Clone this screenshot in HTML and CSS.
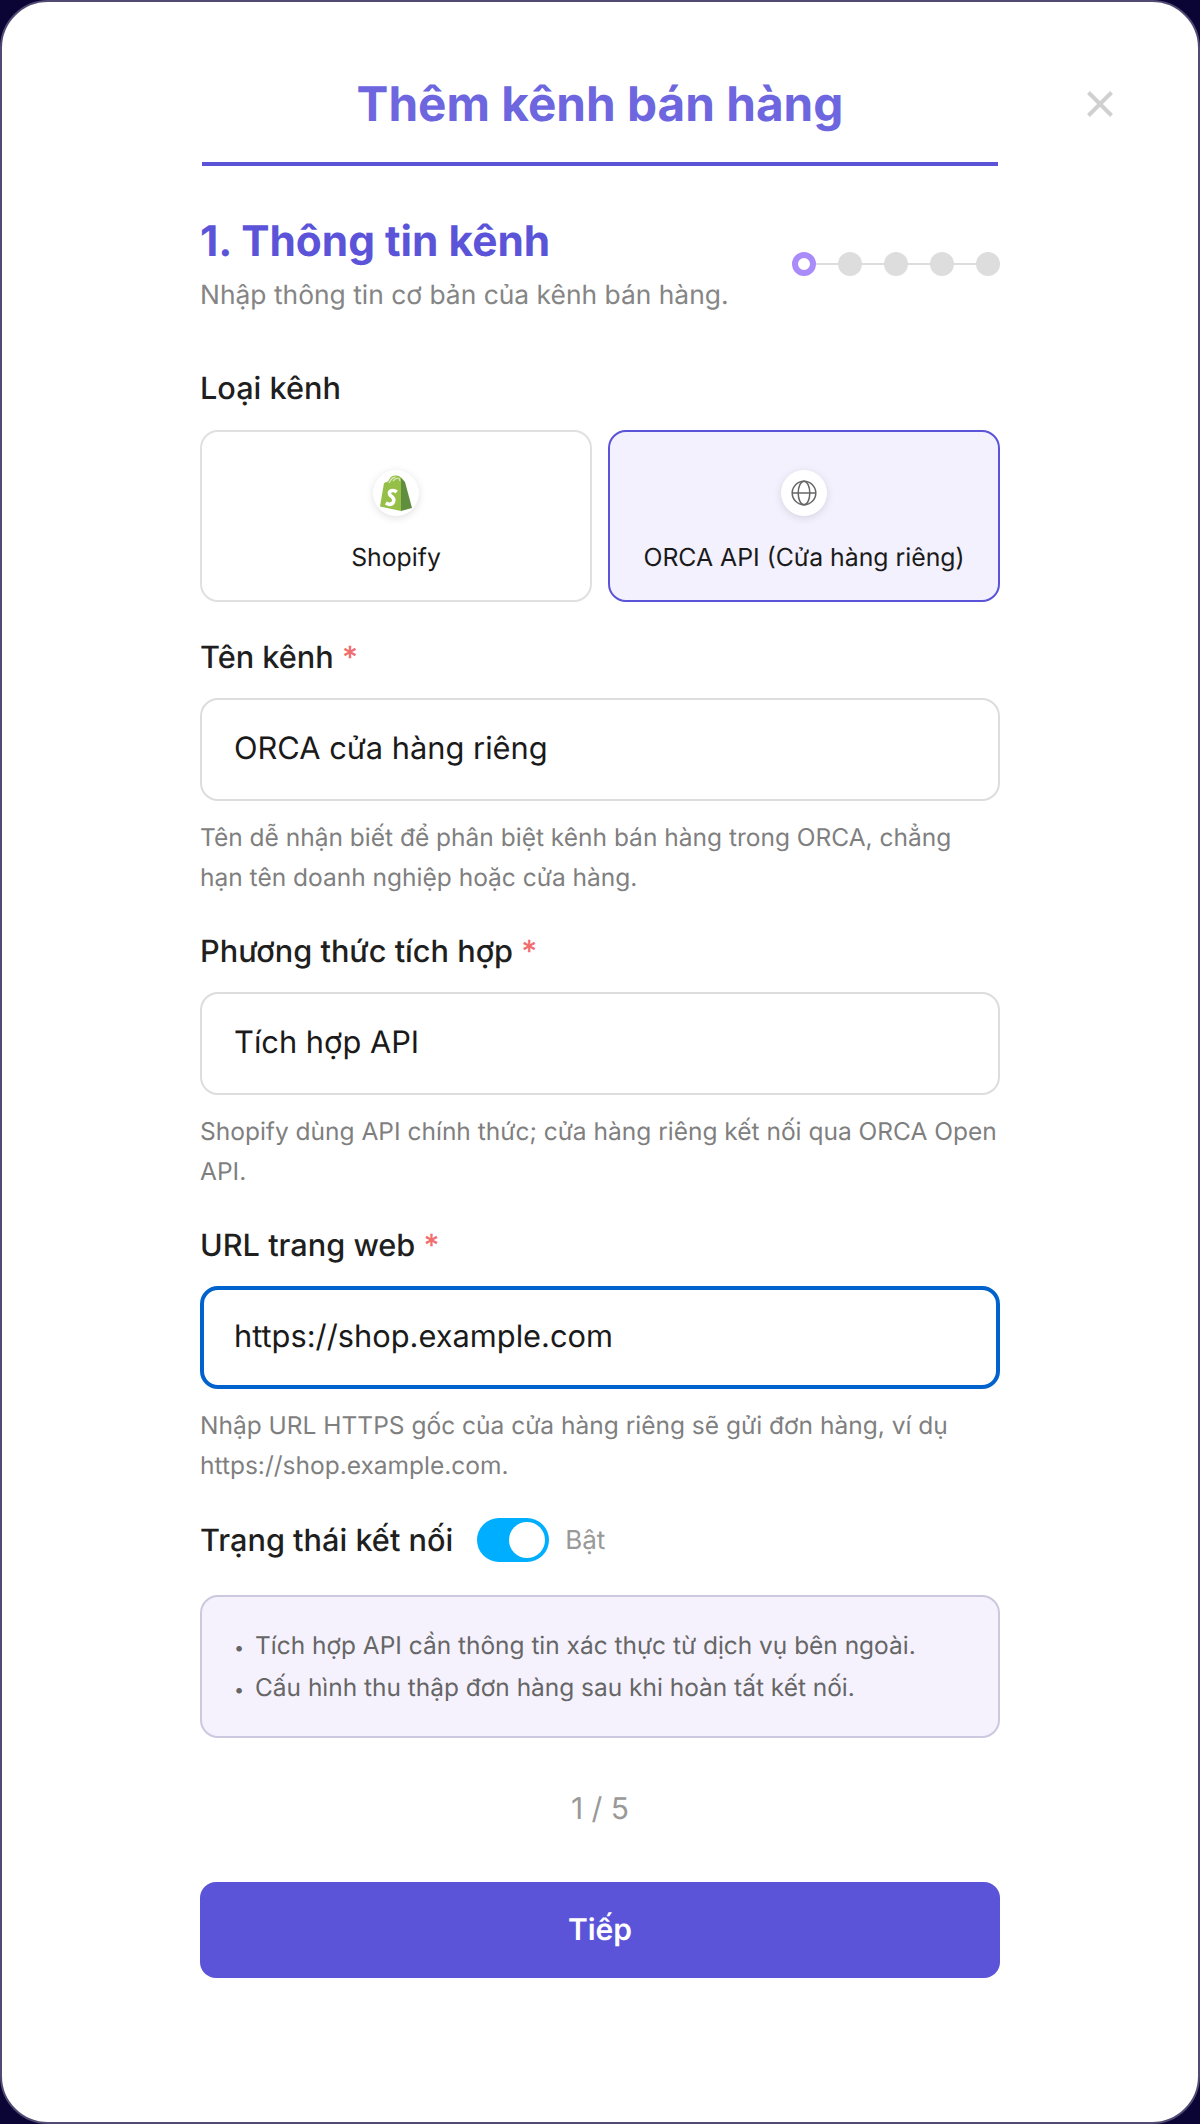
FILE: index.html
```html
<!DOCTYPE html>
<html lang="vi">
<head>
  <meta charset="UTF-8" />
  <meta name="viewport" content="width=device-width, initial-scale=1.0"/>
  <title>Thêm kênh bán hàng</title>
  <link rel="stylesheet" href="styles.css">
</head>
<body>

<div class="modal">
  <div class="modal-head">
    <h1>Thêm kênh bán hàng</h1>
    <button class="close" aria-label="Đóng">
      <svg width="26" height="26" viewBox="0 0 26 26"><path d="M1.5 1.5l23 23M24.500 1.500l-23 23" stroke="#d0d0d0" stroke-width="4" fill="none"/></svg>
    </button>
  </div>

  <div class="step-head">
    <div>
      <h2>1. Thông tin kênh</h2>
      <p class="step-desc">Nhập thông tin cơ bản của kênh bán hàng.</p>
    </div>
    <div class="stepper">
      <span class="dot active"></span>
      <span class="dot"></span>
      <span class="dot"></span>
      <span class="dot"></span>
      <span class="dot"></span>
    </div>
  </div>

  <div class="field type-field">
    <div class="label">Loại kênh</div>
    <div class="type-grid">
      <div class="type-card">
        <span class="type-icon">
          <svg width="32" height="36" viewBox="0 0 32 36">
            <path d="M21 2.500 L25 7 L32 33 L21 36 Z" fill="#5e8e3e"/>
            <path d="M0 31.500 L4 8 Q6 7 8 6.500 Q11 0 15 0.500 Q19 0 21 2.500 L21 36 Z" fill="#95bf47"/>
            <path d="M9 8 Q12 2 15.500 2 M13 6 Q16 2 19 3.500 L20 6" fill="none" stroke="#d7e6b5" stroke-width="1.300"/>
            <path d="M16.800 17 Q14 14.800 11 15.800 Q8 17.800 10.500 20.500 Q15 23.500 13.500 27 Q11 31 5.800 28" fill="none" stroke="#fff" stroke-width="3.600"/>
          </svg>
        </span>
        <span>Shopify</span>
      </div>
      <div class="type-card selected">
        <span class="type-icon">
          <svg width="26" height="26" viewBox="0 0 26 26" fill="none" stroke="#666" stroke-width="1.500">
            <circle cx="13" cy="13" r="11.800"/>
            <ellipse cx="13" cy="13" rx="5.800" ry="11.800"/>
            <path d="M1.200 13h23.600"/>
          </svg>
        </span>
        <span>ORCA API (Cửa hàng riêng)</span>
      </div>
    </div>
  </div>

  <div class="field">
    <label class="label">Tên kênh <span class="req">*</span></label>
    <input class="text-input" type="text" value="ORCA cửa hàng riêng" readonly>
    <p class="hint">Tên dễ nhận biết để phân biệt kênh bán hàng trong ORCA, chẳng hạn tên doanh nghiệp hoặc cửa hàng.</p>
  </div>

  <div class="field">
    <label class="label">Phương thức tích hợp <span class="req">*</span></label>
    <input class="text-input" type="text" value="Tích hợp API" readonly>
    <p class="hint">Shopify dùng API chính thức; cửa hàng riêng kết nối qua ORCA Open API.</p>
  </div>

  <div class="field">
    <label class="label">URL trang web <span class="req">*</span></label>
    <input class="text-input focused" type="text" value="https://shop.example.com" readonly>
    <p class="hint">Nhập URL HTTPS gốc của cửa hàng riêng sẽ gửi đơn hàng, ví dụ https://shop.example.com.</p>
  </div>

  <div class="status-row">
    <span class="label">Trạng thái kết nối</span>
    <span class="toggle"><span class="thumb"></span></span>
    <span class="status-text">Bật</span>
  </div>

  <ul class="info-box">
    <li>Tích hợp API cần thông tin xác thực từ dịch vụ bên ngoài.</li>
    <li>Cấu hình thu thập đơn hàng sau khi hoàn tất kết nối.</li>
  </ul>

  <div class="pager">1 / 5</div>
  <button class="next">Tiếp</button>
</div>

</body>
</html>
```

FILE: styles.css
```css
* {
  box-sizing: border-box;
}

html, body {
  margin: 0;
  height: 100%;
}

body {
  background: #0a0535;
  font-family: Inter, "Noto Sans", sans-serif;
  color: #1f1f1f;
  text-rendering: geometricPrecision;
}

.modal {
  position: relative;
  height: 2124px;
  padding: 0 198px;
  background: #ffffff;
  border: 2px solid #514a72;
  border-radius: 48px;
}

.modal-head {
  height: 164px;
  margin: 0 2px;
  padding-top: 68px;
  border-bottom: 4px solid #5b54d9;
  text-align: center;
}

h1 {
  margin: 0;
  font-size: 47.700px;
  line-height: 68px;
  font-weight: 700;
  color: #6d66df;
}

.close {
  position: absolute;
  top: 89px;
  right: 85px;
  padding: 0;
  border: 0;
  background: none;
  line-height: 0;
}

.step-head {
  display: flex;
  justify-content: space-between;
  align-items: center;
  margin-top: 47px;
}

h2 {
  margin: 0;
  font-size: 42.400px;
  line-height: 58px;
  font-weight: 700;
  color: #5b54d9;
}

.step-desc {
  margin: 4px 0 0;
  font-size: 26.400px;
  line-height: 40px;
  color: #858585;
}

.stepper {
  display: flex;
  gap: 22px;
  background: linear-gradient(#dddddd, #dddddd) center / 100% 2px no-repeat;
}

.dot {
  width: 24px;
  height: 24px;
  border-radius: 50%;
  background: #dddddd;
}

.dot.active {
  background: #ffffff;
  border: 6px solid #a98bfa;
}

.field {
  margin-top: 32px;
}

.type-field {
  margin-top: 51px;
  margin-bottom: 33px;
}

.label {
  display: block;
  padding-top: 1px;
  font-size: 30.700px;
  line-height: 43px;
  font-weight: 500;
  color: #1f1f1f;
}

.req {
  color: #f26d6d;
}

.type-grid {
  display: grid;
  grid-template-columns: 1fr 1fr;
  gap: 16px;
  margin-top: 20px;
}

.type-card {
  display: flex;
  flex-direction: column;
  align-items: center;
  gap: 23px;
  height: 172px;
  padding-top: 38px;
  border: 2px solid #e0e0e0;
  border-radius: 18px;
  font-size: 24.800px;
  line-height: 36px;
  color: #1a1a1a;
}

.type-card.selected {
  border-color: #5b54d9;
  background: #f3f1fe;
}

.type-icon {
  display: flex;
  align-items: center;
  justify-content: center;
  width: 46px;
  height: 46px;
  border-radius: 50%;
  background: #ffffff;
  box-shadow: 0 2px 8px rgba(0,0,0,0.12);
}

.text-input {
  display: block;
  width: 100%;
  height: 103px;
  margin-top: 19px;
  padding: 0 32px 2px;
  border: 2px solid #dddddd;
  border-radius: 18px;
  outline: none;
  font-family: inherit;
  font-size: 30.800px;
  color: #1a1a1a;
  background: #ffffff;
  text-rendering: geometricPrecision;
}

.text-input.focused {
  border: 4px solid #0062cc;
  padding: 0 30px 2px;
}

.hint {
  margin: 16px 0 0;
  font-size: 24.500px;
  line-height: 40px;
  color: #7f7f7f;
}

.status-row {
  display: flex;
  align-items: center;
  gap: 24px;
  margin-top: 33px;
}

.toggle {
  display: flex;
  justify-content: flex-end;
  align-items: center;
  width: 72px;
  height: 44px;
  padding: 4px;
  border-radius: 22px;
  background: #00aeff;
}

.thumb {
  width: 36px;
  height: 36px;
  border-radius: 50%;
  background: #ffffff;
}

.status-text {
  margin-left: -8px;
  font-size: 26px;
  color: #999999;
}

.info-box {
  height: 143px;
  margin: 33px 0 0;
  padding: 27px 32px;
  list-style: none;
  background: #f5f2fe;
  border: 2px solid #ccc8e0;
  border-radius: 18px;
  font-size: 24.450px;
  line-height: 42px;
  color: #666666;
}

.info-box li::before {
  content: "•";
  display: inline-block;
  width: 21px;
  font-size: 18px;
  line-height: 1;
}

.pager {
  margin-top: 49px;
  font-size: 30px;
  line-height: 44px;
  text-align: center;
  color: #999999;
}

.next {
  display: block;
  width: 100%;
  height: 96px;
  margin-top: 51px;
  border: 0;
  border-radius: 16px;
  background: #5b54d9;
  color: #ffffff;
  font-family: inherit;
  font-size: 30px;
  font-weight: 600;
  text-rendering: geometricPrecision;
}
```
